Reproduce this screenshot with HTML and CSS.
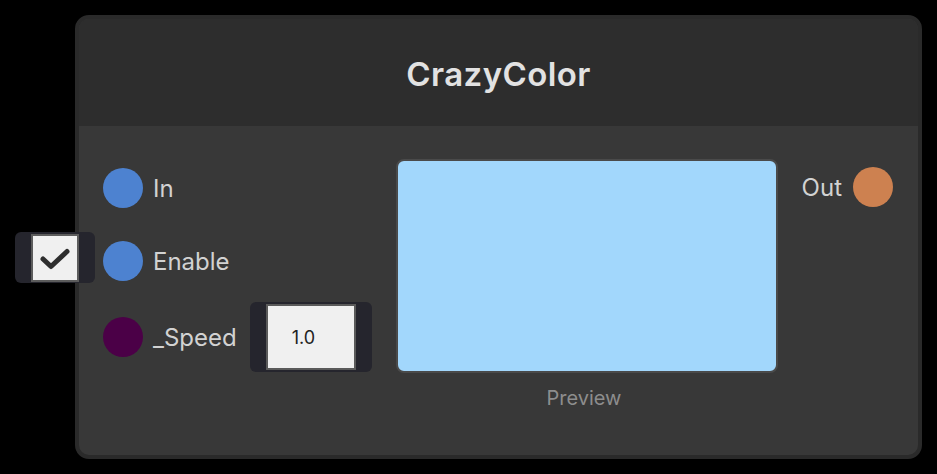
FILE: index.html
```html
<!DOCTYPE html>
<html>
<head>
<meta charset="utf-8">
<link rel="stylesheet" href="styles.css">
</head>
<body>
<div class="node">
  <div class="node-header">CrazyColor</div>
  <div class="node-body">
    <div class="inputs">
      <div class="port-row row-in">
        <span class="port port-blue"></span>
        <span class="label">In</span>
      </div>
      <div class="port-row row-enable">
        <div class="checkbox-field">
          <div class="checkbox">
            <svg width="30" height="22" viewBox="0 0 30 22"><path d="M3 11 L11 18.5 L27 3.5" fill="none" stroke="#2e2e2e" stroke-width="5" stroke-linecap="round" stroke-linejoin="round"/></svg>
          </div>
        </div>
        <span class="port port-blue"></span>
        <span class="label">Enable</span>
      </div>
      <div class="port-row row-speed">
        <span class="port port-purple"></span>
        <span class="label">_Speed</span>
        <div class="float-field">
          <div class="float-input">1.0</div>
        </div>
      </div>
    </div>
    <div class="preview-col">
      <div class="preview"></div>
      <div class="preview-label">Preview</div>
    </div>
    <div class="outputs">
      <div class="port-row row-out">
        <span class="label">Out</span>
        <span class="port port-orange"></span>
      </div>
    </div>
  </div>
</div>
</body>
</html>
```

FILE: styles.css
```css
html, body {
  margin: 0;
  padding: 0;
  background: #000;
  width: 937px;
  height: 474px;
  overflow: hidden;
  font-family: Inter, "Noto Sans", sans-serif;
}
.node {
  margin: 15px 0 0 75px;
  width: 839px;
  height: 436px;
  border: 4px solid #2a2a2a;
  border-radius: 14px;
  background: #383838;
  display: flex;
  flex-direction: column;
  overflow: visible;
}
.node-header {
  height: 107px;
  background: #2d2d2d;
  border-radius: 10px 10px 0 0;
  color: #e2e2e2;
  font-weight: 600;
  font-size: 33px;
  letter-spacing: 0.4px;
  display: flex;
  align-items: center;
  justify-content: center;
  padding-top: 2px;
  box-sizing: border-box;
}
.node-body {
  flex: 1;
  display: flex;
  border-radius: 0 0 10px 10px;
}
.inputs {
  width: 317px;
  padding: 42px 0 0 24px;
  box-sizing: border-box;
  display: flex;
  flex-direction: column;
}
.port-row {
  display: flex;
  align-items: center;
  position: relative;
}
.row-in { height: 40px; }
.row-enable { height: 40px; margin-top: 33px; }
.row-speed { height: 70px; margin-top: 21px; }
.port {
  width: 40px;
  height: 40px;
  border-radius: 50%;
  flex: none;
}
.port-blue { background: #4d82d0; }
.port-purple { background: #4b0047; }
.port-orange { background: #cd8150; }
.label {
  color: #d2d2d2;
  font-size: 24px;
  margin-left: 10px;
}
.checkbox-field {
  position: absolute;
  left: -88px;
  top: -9px;
  width: 80px;
  height: 51px;
  background: #25252d;
  border-radius: 6px;
  padding: 2px 16px 1px;
  box-sizing: border-box;
}
.checkbox {
  width: 48px;
  height: 48px;
  background: #f0f0f0;
  border: 2px solid #5c5c5c;
  box-sizing: border-box;
  display: flex;
  align-items: center;
  justify-content: center;
}
.checkbox svg { margin-top: 2px; }
.float-field {
  margin-left: 13px;
  width: 122px;
  height: 70px;
  background: #25252d;
  border-radius: 6px;
  padding: 2px 16px;
  box-sizing: border-box;
}
.float-input {
  width: 90px;
  height: 66px;
  background: #f0f0f0;
  border: 2px solid #5a5a5a;
  box-sizing: border-box;
  color: #222;
  font-size: 18px;
  display: flex;
  align-items: center;
  padding-left: 24px;
}
.preview-col {
  width: 382px;
  padding-top: 33px;
  display: flex;
  flex-direction: column;
  align-items: center;
}
.preview {
  width: 382px;
  height: 214px;
  background: #a2d7fc;
  border: 2px solid #4a4a4a;
  border-radius: 8px;
  box-sizing: border-box;
}
.preview-label {
  margin-top: 13px;
  padding-right: 6px;
  color: #8d8d8d;
  font-size: 20px;
  line-height: 24px;
}
.outputs {
  flex: 1;
  padding: 41px 25px 0 0;
  display: flex;
  flex-direction: column;
  align-items: flex-end;
}
.row-out { height: 40px; }
.row-out .label { margin-left: 0; margin-right: 11px; }
```
